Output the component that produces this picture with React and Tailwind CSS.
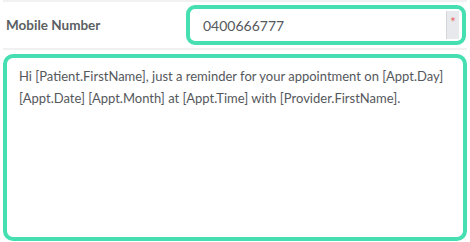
export default function App() {
  return (
    <div className="w-[470px] h-[242px] bg-white overflow-hidden font-['Lato',sans-serif] text-[#555a5e]">
      <div className="h-[2px] bg-[#f1f1f1] mx-[3px]" />
      <div className="flex items-center pl-[6px] pr-[4px] pt-[3px] pb-[3px]">
        <div className="w-[180px] text-[13.5px] font-bold text-[#5b5f63]">Mobile Number</div>
        <div className="flex-1 h-[40px] flex border-[4px] border-[#46dfb1] rounded-[9px] overflow-hidden">
          <div className="flex-1 flex items-center pl-[13px] text-[14px] text-[#55585c]">0400666777</div>
          <div className="py-[2px] pr-[3px] flex">
            <div className="w-[13px] bg-[#e8e9ec] border-l border-[#d4d5d8] flex justify-center pt-[4px] text-[#e86161] text-[13px] leading-[14px]">*</div>
          </div>
        </div>
      </div>
      <div className="h-[2px] bg-[#f1f1f1] mx-[3px]" />
      <div className="px-[3px] pt-[4px]">
        <div className="h-[187px] border-[4px] border-[#46dfb1] rounded-[10px] px-[12px] pt-[7px] text-[13px] leading-[22px] text-[#55585c]">
          Hi [Patient.FirstName], just a reminder for your appointment on [Appt.Day] [Appt.Date] [Appt.Month] at [Appt.Time] with [Provider.FirstName].
        </div>
      </div>
    </div>
  );
}
